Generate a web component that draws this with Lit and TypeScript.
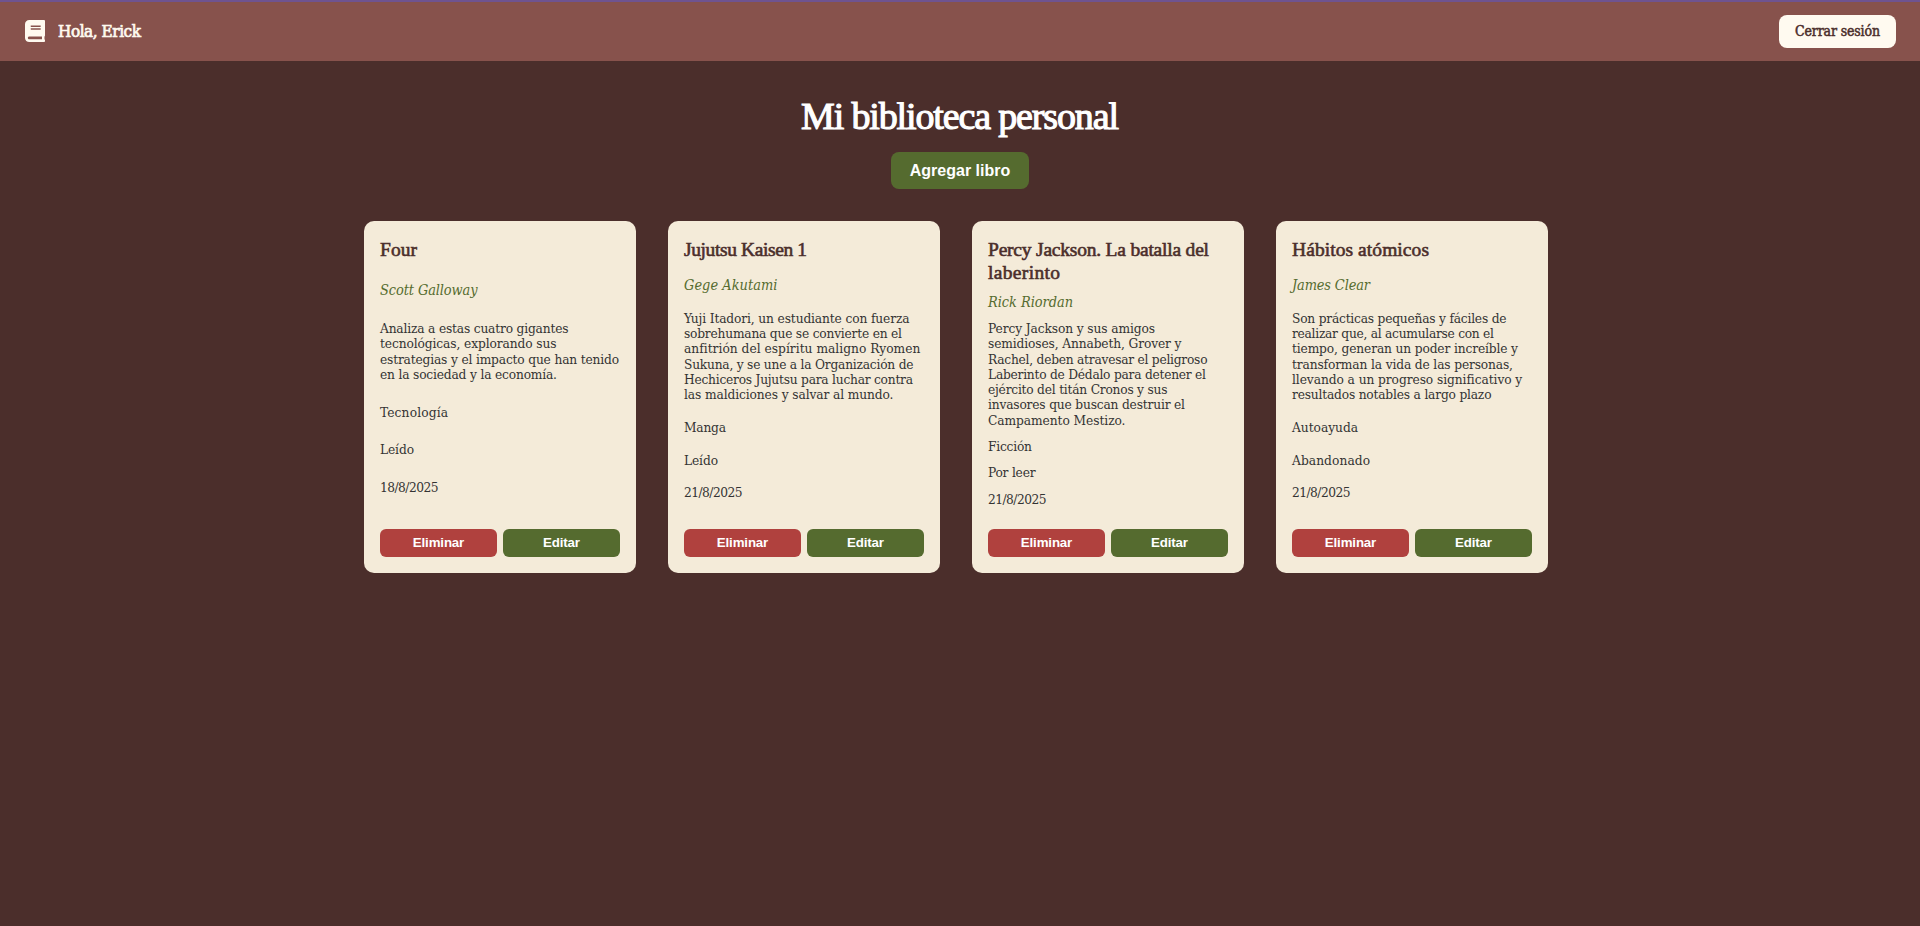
import { LitElement, html, css } from "lit";
import { customElement, property } from "lit/decorators.js";

interface Line { t: string; w: number }
interface Book {
  title: Line[]; author: Line; description: Line[];
  genre: Line; status: Line; date: Line;
}

const l = (t: string, w: number): Line => ({ t, w });

const books: Book[] = [
  {
    title: [l("Four", 37)],
    author: l("Scott Galloway", 97.5),
    description: [
      l("Analiza a estas cuatro gigantes", 188.5),
      l("tecnológicas, explorando sus", 176.5),
      l("estrategias y el impacto que han tenido", 239),
      l("en la sociedad y la economía.", 177),
    ],
    genre: l("Tecnología", 68), status: l("Leído", 34), date: l("18/8/2025", 58.5),
  },
  {
    title: [l("Jujutsu Kaisen 1", 123)],
    author: l("Gege Akutami", 93.5),
    description: [
      l("Yuji Itadori, un estudiante con fuerza", 225.5),
      l("sobrehumana que se convierte en el", 218),
      l("anfitrión del espíritu maligno Ryomen", 236),
      l("Sukuna, y se une a la Organización de", 229.5),
      l("Hechiceros Jujutsu para luchar contra", 229),
      l("las maldiciones y salvar al mundo.", 209.5),
    ],
    genre: l("Manga", 42), status: l("Leído", 34), date: l("21/8/2025", 58.5),
  },
  {
    title: [l("Percy Jackson. La batalla del", 221), l("laberinto", 72)],
    author: l("Rick Riordan", 85),
    description: [
      l("Percy Jackson y sus amigos", 167),
      l("semidioses, Annabeth, Grover y", 193.5),
      l("Rachel, deben atravesar el peligroso", 219.5),
      l("Laberinto de Dédalo para detener el", 218),
      l("ejército del titán Cronos y sus", 179.5),
      l("invasores que buscan destruir el", 197),
      l("Campamento Mestizo.", 137.5),
    ],
    genre: l("Ficción", 44), status: l("Por leer", 47.5), date: l("21/8/2025", 58.5),
  },
  {
    title: [l("Hábitos atómicos", 137)],
    author: l("James Clear", 78),
    description: [
      l("Son prácticas pequeñas y fáciles de", 214.5),
      l("realizar que, al acumularse con el", 202),
      l("tiempo, generan un poder increíble y", 226),
      l("transforman la vida de las personas,", 221),
      l("llevando a un progreso significativo y", 230),
      l("resultados notables a largo plazo", 199.5),
    ],
    genre: l("Autoayuda", 66), status: l("Abandonado", 78), date: l("21/8/2025", 58.5),
  },
];

/** One line of text whose tracking is adjusted so that it spans a given width. */
@customElement("fit-line")
export class FitLine extends LitElement {
  @property() text = "";
  @property({ type: Number }) span = 0;

  static styles = css`
    :host { display: block; white-space: nowrap; }
    .run { display: block; width: max-content; }
  `;

  firstUpdated() {
    const run = this.renderRoot.querySelector<HTMLElement>(".run")!;
    const natural = run.getBoundingClientRect().width;
    if (this.span > 0 && natural > 0) {
      const tracking = (this.span - natural) / (this.text.length - 1);
      run.style.letterSpacing = `${tracking}px`;
      run.style.marginRight = `${-tracking}px`;
    }
  }

  render() {
    return html`<span class="run">${this.text}</span>`;
  }
}

const line = (x: Line) => html`<fit-line .text=${x.t} .span=${x.w}></fit-line>`;

@customElement("book-card")
export class BookCard extends LitElement {
  @property({ attribute: false }) book!: Book;

  static styles = css`
    :host {
      display: flex;
      flex-direction: column;
      justify-content: space-between;
      box-sizing: border-box;
      height: 352px;
      padding: 16px;
      border-radius: 10px;
      background: #f4ebd9;
      color: #333;
      font: 13.6px/15.3px "DejaVu Serif Condensed", "DejaVu Serif", serif;
      font-stretch: condensed;
    }
    h2 {
      margin: 0;
      padding-top: 1px;
      font: 400 19.5px/23px "Liberation Serif", serif;
      -webkit-text-stroke: 0.6px #4b2e2b;
      color: #4b2e2b;
    }
    p { margin: 0; }
    .author { font-size: 14.4px; line-height: 15px; font-style: italic; color: #556b2f; }
    .actions { display: flex; gap: 6px; margin-top: 11px; }
    button {
      flex: 1;
      height: 28px;
      padding: 0;
      border: 0;
      border-radius: 6px;
      color: #fff;
      font: bold 13.3px "Liberation Sans", Arial, sans-serif;
      letter-spacing: -0.15px;
    }
    .delete { background: #b0413e; }
    .edit { background: #556b2f; }
  `;

  render() {
    const b = this.book;
    return html`
      <h2>${b.title.map(line)}</h2>
      <p class="author">${line(b.author)}</p>
      <p>${b.description.map(line)}</p>
      <p>${line(b.genre)}</p>
      <p>${line(b.status)}</p>
      <p>${line(b.date)}</p>
      <div class="actions">
        <button class="delete">Eliminar</button>
        <button class="edit">Editar</button>
      </div>
    `;
  }
}

@customElement("app-root")
export class AppRoot extends LitElement {
  static styles = css`
    :host {
      display: block;
      box-sizing: border-box;
      height: 100vh;
      overflow: hidden;
      background: #4b2e2b;
      color: #fffaf0;
      font-family: "DejaVu Serif Condensed", "DejaVu Serif", serif;
      font-stretch: condensed;
    }
    header {
      display: flex;
      align-items: center;
      justify-content: space-between;
      box-sizing: border-box;
      height: 61px;
      padding: 0 24px 0 25px;
      border-top: 2px solid #6f5390;
      background: #87524c;
    }
    .user {
      display: flex;
      align-items: center;
      gap: 13px;
      padding-bottom: 1px;
      font-size: 17px;
      -webkit-text-stroke: 0.7px #fffaf0;
    }
    .user svg { display: block; width: 20px; height: 22px; }
    .logout {
      display: flex;
      align-items: center;
      justify-content: center;
      width: 117px;
      height: 33px;
      margin-bottom: 1px;
      padding: 0;
      border: 0;
      border-radius: 8px;
      background: #fffaf0;
      color: #4b2e2b;
      font: 14px "DejaVu Serif Condensed", "DejaVu Serif", serif;
      font-stretch: condensed;
      -webkit-text-stroke: 0.5px #4b2e2b;
    }
    main { display: flex; flex-direction: column; align-items: center; padding-top: 33px; }
    h1 {
      margin: 0 0 14px;
      font: 400 38px/44px "Liberation Serif", serif;
      -webkit-text-stroke: 1.1px #fff;
      color: #fff;
    }
    .add {
      width: 138px;
      height: 37px;
      padding: 0;
      border: 0;
      border-radius: 8px;
      background: #556b2f;
      color: #fff;
      font: bold 16px "Liberation Sans", Arial, sans-serif;
    }
    .shelf {
      display: grid;
      grid-template-columns: repeat(4, 272px);
      gap: 32px;
      margin-top: 32px;
      padding-right: 8px;
    }
  `;

  render() {
    return html`
      <header>
        <div class="user">
          <svg viewBox="0 0 448 512" preserveAspectRatio="none" fill="#fffaf0" stroke="none"><path d="M448 360V24c0-13.300-10.700-24-24-24H96C43 0 0 43 0 96v320c0 53 43 96 96 96h328c13.300 0 24-10.700 24-24v-16c0-7.500-3.500-14.300-8.900-18.700-4.200-15.400-4.200-59.300 0-74.700 5.400-4.300 8.900-11.100 8.900-18.600zM128 134c0-3.300 2.700-6 6-6h212c3.300 0 6 2.700 6 6v20c0 3.300-2.700 6-6 6H134c-3.300 0-6-2.700-6-6v-20zm0 64c0-3.300 2.700-6 6-6h212c3.300 0 6 2.700 6 6v20c0 3.300-2.700 6-6 6H134c-3.300 0-6-2.700-6-6v-20zm253.400 250H96c-17.700 0-32-14.300-32-32 0-17.600 14.400-32 32-32h285.400c-1.900 17.100-1.900 46.900 0 64z"/></svg>
          ${line(l("Hola, Erick", 83))}
        </div>
        <button class="logout">${line(l("Cerrar sesión", 85))}</button>
      </header>
      <main>
        <h1>${line(l("Mi biblioteca personal", 318))}</h1>
        <button class="add">Agregar libro</button>
        <section class="shelf">
          ${books.map((b) => html`<book-card .book=${b}></book-card>`)}
        </section>
      </main>
    `;
  }
}
